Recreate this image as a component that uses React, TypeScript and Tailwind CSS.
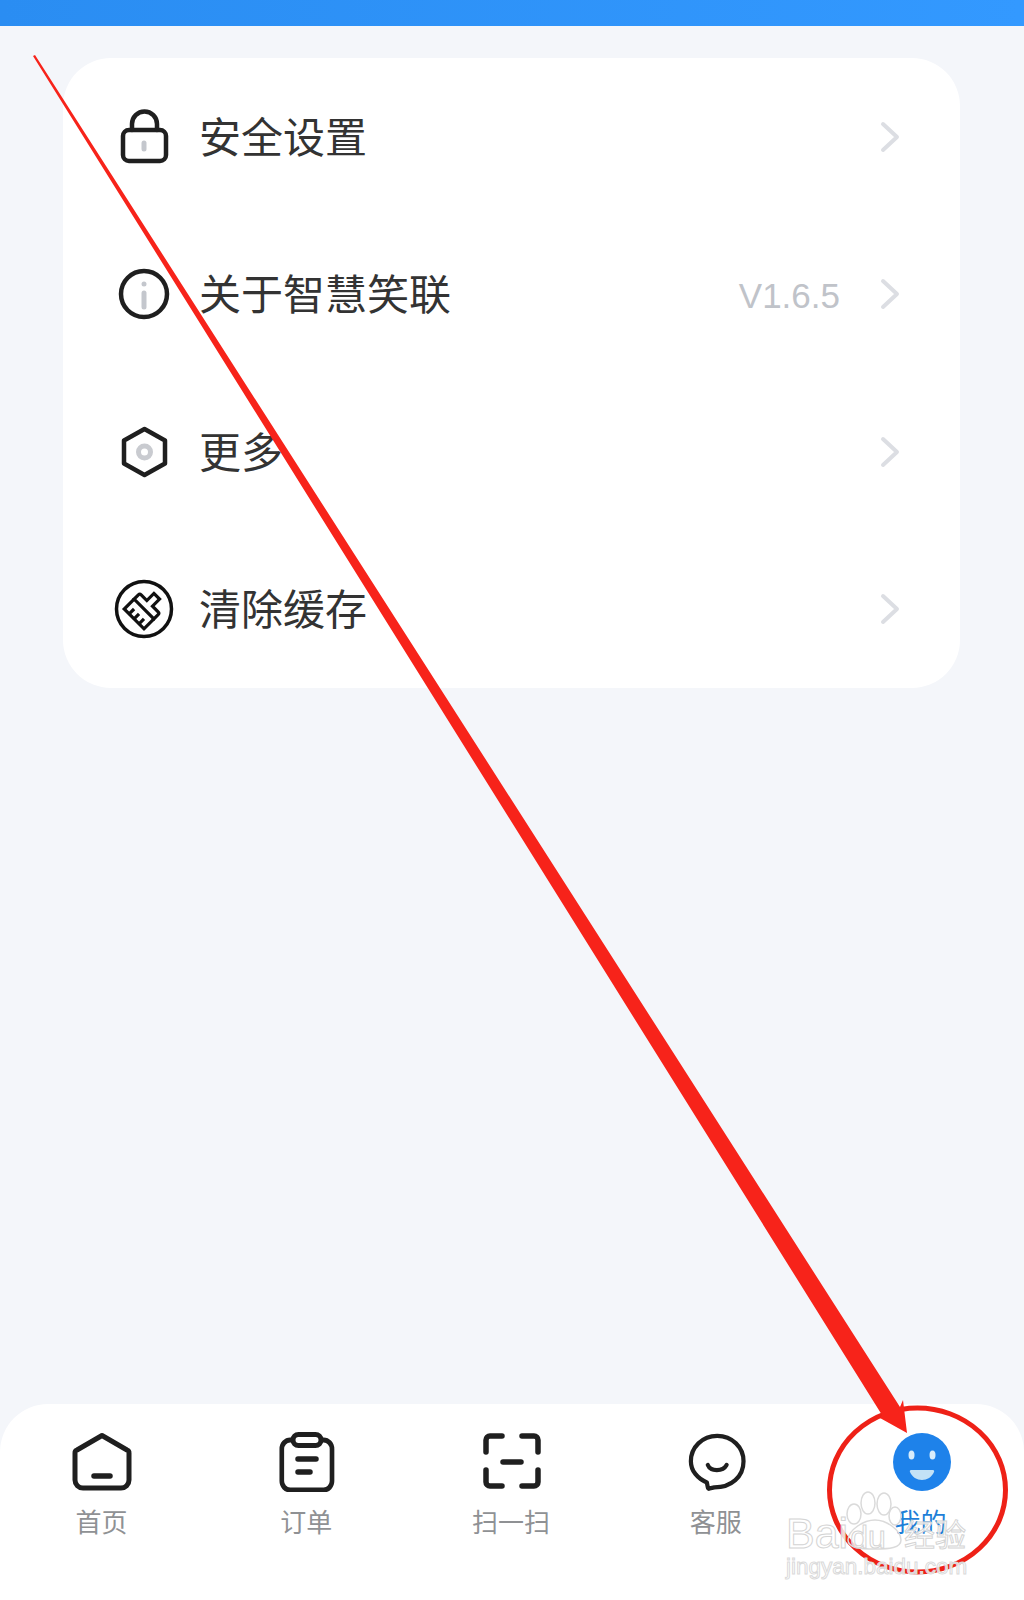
import React from "react";

const cjk = { fontFamily: '"Noto Sans CJK SC", "Liberation Sans", sans-serif' };

const Sv = ({ children }: { children: React.ReactNode }) => (
  <svg width="60" height="60" viewBox="0 0 60 60" fill="none" stroke="#1f1f1f" strokeWidth="4.5" strokeLinecap="round" strokeLinejoin="round">
    {children}
  </svg>
);

const Lock = () => (
  <Sv>
    <rect x="9" y="23" width="43" height="31" rx="6" />
    <path d="M18 23v-6a12 12 0 0 1 25 0v6" />
    <path d="M30 36v6" stroke="#c4c7cd" strokeWidth="5" />
  </Sv>
);
const Info = () => (
  <Sv>
    <circle cx="30" cy="30" r="23" />
    <path d="M30 29v14" stroke="#c4c7cd" strokeWidth="5" />
    <circle cx="30" cy="20" r="2.5" fill="#c4c7cd" stroke="none" />
  </Sv>
);
const Hex = () => (
  <Sv>
    <path d="M30.500 7 51 18.500v23L30.500 53 10 41.500v-23Z" />
    <circle cx="30.500" cy="30" r="6" stroke="#c9cbd0" strokeWidth="5" />
  </Sv>
);
const Broom = () => (
  <Sv>
    <circle cx="30" cy="30" r="27.500" stroke="#111" strokeWidth="3.500" />
    <g stroke="#111" strokeWidth="3.200" strokeLinejoin="miter" strokeLinecap="butt" transform="rotate(45 30 30)">
      <path d="M26 12h8v10h8a2 2 0 0 1 2 2v6H16v-6a2 2 0 0 1 2-2h8Z" />
      <path d="M16 30v14h28V30M23 44v-7M30 44v-7M37 44v-7" />
    </g>
  </Sv>
);
const Chevron = () => (
  <svg width="20" height="32" viewBox="0 0 20 32" fill="none" stroke="#dcdee3" strokeWidth="4" strokeLinecap="round" strokeLinejoin="round">
    <path d="M3 3 17 16 3 29" />
  </svg>
);

const NavSv = ({ children }: { children: React.ReactNode }) => (
  <svg width="60" height="60" viewBox="0 0 60 60" fill="none" stroke="#1f1f1f" strokeWidth="5" strokeLinecap="round" strokeLinejoin="round">
    {children}
  </svg>
);
const Home = () => (
  <NavSv>
    <path d="M30 3.500 55 18a3 3 0 0 1 2 3v27a8 8 0 0 1-8 8H11a8 8 0 0 1-8-8V21a3 3 0 0 1 2-3Z" />
    <path d="M22 44h16" strokeWidth="5.500" />
  </NavSv>
);
const Clip = () => (
  <NavSv>
    <path d="M13 7h-1a9 9 0 0 0-9 9v32a9 9 0 0 0 9 9h36a9 9 0 0 0 9-9V16a9 9 0 0 0-9-9h-1" transform="translate(2 1) scale(.93 1)" />
    <rect x="16" y="2.500" width="28" height="11" rx="5.500" />
    <path d="M21 27h18M21 40h12" strokeWidth="5.500" />
  </NavSv>
);
const Scan = () => (
  <NavSv>
    <path d="M4 20V8a4 4 0 0 1 4-4h12M40 4h12a4 4 0 0 1 4 4v12M4 38v12a4 4 0 0 0 4 4h12M56 38v12a4 4 0 0 1-4 4H40" strokeWidth="5.500" strokeLinejoin="miter" />
    <path d="M21 30h18" strokeWidth="5.500" />
  </NavSv>
);
const Chat = () => (
  <NavSv>
    <g transform="translate(2 1) scale(.94 .97)" strokeWidth="4.500">
      <path d="M22 57c-1 1-2 0-2-1l-1-5C9 47 2 39 2 29 2 15 14 3 30 3s28 12 28 26c0 16-13 27-31 27Z" />
      <path d="M20 33c3 7 16 7 20 0" />
    </g>
  </NavSv>
);
const Face = () => (
  <svg width="60" height="60" viewBox="0 0 60 60">
    <circle cx="30" cy="30" r="29" fill="#1e82ea" />
    <ellipse cx="19.500" cy="23" rx="3" ry="4.500" fill="#d8ecfb" />
    <ellipse cx="40.500" cy="23" rx="3" ry="4.500" fill="#d8ecfb" />
    <path d="M19 38h22c1 0 1.500 1 1 2-2 5-7 8-12 8s-10-3-12-8c-.5-1 0-2 1-2Z" fill="#c3e2f6" />
  </svg>
);

const rows = [
  { icon: <Lock />, label: "安全设置", value: "" },
  { icon: <Info />, label: "关于智慧笑联", value: "V1.6.5" },
  { icon: <Hex />, label: "更多", value: "" },
  { icon: <Broom />, label: "清除缓存", value: "" },
];

const tabs = [
  { icon: <Home />, label: "首页" },
  { icon: <Clip />, label: "订单" },
  { icon: <Scan />, label: "扫一扫" },
  { icon: <Chat />, label: "客服" },
  { icon: <Face />, label: "我的", active: true },
];

export default function App() {
  return (
    <div className="relative flex h-[1600px] w-[1024px] flex-col overflow-hidden bg-[#f4f6fa]" style={cjk}>
      <div className="h-[26px] bg-gradient-to-r from-[#2a8df2] to-[#3399ff]" />
      <main className="flex-1 pl-[63px] pt-[32px]">
        <section className="w-[897px] rounded-[48px] bg-white">
          {rows.map((r) => (
            <div key={r.label} className="flex h-[157.5px] items-center pl-[51px] pr-[60px]">
              <span className="flex h-[60px] w-[60px] shrink-0 items-center justify-center">{r.icon}</span>
              <span className="ml-[25px] flex-1 pb-[4px] text-[42px] leading-none text-[#333333]">{r.label}</span>
              {r.value && (
                <span className="mr-[40px] pt-[2px] text-[35px] leading-none text-[#c0c3c9] [font-family:'Liberation_Sans',sans-serif]">
                  {r.value}
                </span>
              )}
              <Chevron />
            </div>
          ))}
        </section>
      </main>
      <nav className="grid h-[196px] grid-cols-5 rounded-t-[48px] bg-white pt-[28px]">
        {tabs.map((t) => (
          <div key={t.label} className="flex flex-col items-center">
            {t.icon}
            <span className={`mr-[2px] mt-[11px] text-[26px] leading-[36px] ${t.active ? "text-[#1f7fd8]" : "text-[#8f9194]"}`}>
              {t.label}
            </span>
          </div>
        ))}
      </nav>

      {/* annotation drawn over the screenshot */}
      <svg className="pointer-events-none absolute left-0 top-0" width="1024" height="1600" viewBox="0 0 1024 1600" fill="none">
        <ellipse cx="917.500" cy="1490" rx="88" ry="82" stroke="#ee2117" strokeWidth="5" />
        <path d="M33 56 35 55 900 1407 903 1400 907 1433 880 1418 882 1415 Z" fill="#f7231a" />
        <g fill="#fff" stroke="#dadada" strokeWidth="1.500">
          <ellipse cx="854" cy="1514" rx="7" ry="10" />
          <ellipse cx="868" cy="1503" rx="7" ry="11" />
          <ellipse cx="884" cy="1504" rx="7" ry="11" />
          <ellipse cx="895" cy="1516" rx="6" ry="9" />
          <path d="M848 1540c0-10 16-20 27-20s26 10 26 20c0 8-12 9-26 9s-27-1-27-9Z" fill="none" />
        </g>
      </svg>
      <div className="pointer-events-none absolute left-[786px] top-[1511px] flex items-baseline text-[43px] leading-[44px] text-white/80 [-webkit-text-stroke:1px_#d4d4d4] [font-family:'Liberation_Sans',sans-serif]">
        Bai<span className="ml-[2px] text-[32px]">du</span>
      </div>
      <div className="pointer-events-none absolute left-[904px] top-[1513px] text-[31px] leading-[40px] text-white/80 [-webkit-text-stroke:1px_#d4d4d4]">
        经验
      </div>
      <div className="pointer-events-none absolute left-[786px] top-[1552px] text-[22.500px] leading-[30px] text-white/80 [-webkit-text-stroke:1px_#dadada] [font-family:'Liberation_Sans',sans-serif]">
        jingyan.baidu.com
      </div>
    </div>
  );
}
